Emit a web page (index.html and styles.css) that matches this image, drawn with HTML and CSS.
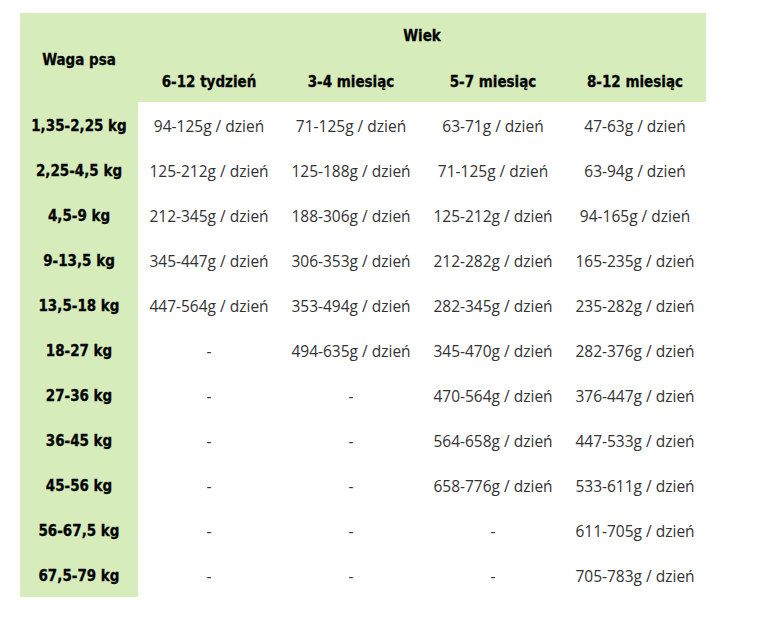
FILE: index.html
```html
<!DOCTYPE html>
<html lang="pl">
<head>
<meta charset="utf-8">
<title>Waga psa</title>
<link rel="stylesheet" href="styles.css">
</head>
<body>
<table class="feed">
  <colgroup>
    <col class="c-first">
    <col class="c-data"><col class="c-data"><col class="c-data"><col class="c-data">
  </colgroup>
  <thead>
    <tr class="h1">
      <th rowspan="2" class="corner">Waga psa</th>
      <th colspan="4">Wiek</th>
    </tr>
    <tr class="h2">
      <th>6-12 tydzień</th>
      <th>3-4 miesiąc</th>
      <th>5-7 miesiąc</th>
      <th>8-12 miesiąc</th>
    </tr>
  </thead>
  <tbody>
    <tr><th>1,35-2,25 kg</th><td>94-125g / dzień</td><td>71-125g / dzień</td><td>63-71g / dzień</td><td>47-63g / dzień</td></tr>
    <tr><th>2,25-4,5 kg</th><td>125-212g / dzień</td><td>125-188g / dzień</td><td>71-125g / dzień</td><td>63-94g / dzień</td></tr>
    <tr><th>4,5-9 kg</th><td>212-345g / dzień</td><td>188-306g / dzień</td><td>125-212g / dzień</td><td>94-165g / dzień</td></tr>
    <tr><th>9-13,5 kg</th><td>345-447g / dzień</td><td>306-353g / dzień</td><td>212-282g / dzień</td><td>165-235g / dzień</td></tr>
    <tr><th>13,5-18 kg</th><td>447-564g / dzień</td><td>353-494g / dzień</td><td>282-345g / dzień</td><td>235-282g / dzień</td></tr>
    <tr><th>18-27 kg</th><td>-</td><td>494-635g / dzień</td><td>345-470g / dzień</td><td>282-376g / dzień</td></tr>
    <tr><th>27-36 kg</th><td>-</td><td>-</td><td>470-564g / dzień</td><td>376-447g / dzień</td></tr>
    <tr><th>36-45 kg</th><td>-</td><td>-</td><td>564-658g / dzień</td><td>447-533g / dzień</td></tr>
    <tr><th>45-56 kg</th><td>-</td><td>-</td><td>658-776g / dzień</td><td>533-611g / dzień</td></tr>
    <tr><th>56-67,5 kg</th><td>-</td><td>-</td><td>-</td><td>611-705g / dzień</td></tr>
    <tr><th>67,5-79 kg</th><td>-</td><td>-</td><td>-</td><td>705-783g / dzień</td></tr>
  </tbody>
</table>
</body>
</html>
```
FILE: styles.css
```css
html, body {
  margin: 0;
  padding: 0;
  background: #ffffff;
}

.feed {
  margin: 13px 0 0 20px;
  border-collapse: collapse;
  border-spacing: 0;
  table-layout: fixed;
  width: 686px;
  color: #222222;
  font-family: "Open Sans", "DejaVu Sans", sans-serif;
  font-size: 15.5px;
}

.c-first { width: 118px; }
.c-data { width: 142px; }

.feed th,
.feed td {
  padding: 0;
  text-align: center;
  vertical-align: middle;
  white-space: nowrap;
}

.feed th {
  font-family: "DejaVu Sans Condensed", "DejaVu Sans", sans-serif;
  font-weight: bold;
  font-size: 15px;
  color: #050505;
  -webkit-text-stroke: 0.3px #050505;
  background: #d6ecbb;
}

.feed thead .h1 { height: 45px; }
.feed thead .h2 { height: 44px; }
.feed thead .h2 th { padding-top: 4px; }
.feed thead .corner { padding-top: 4px; }

.feed tbody tr { height: 45px; }
.feed tbody th,
.feed tbody td { padding-top: 3px; }

.feed td {
  background: #ffffff;
  color: #333333;
}
```
